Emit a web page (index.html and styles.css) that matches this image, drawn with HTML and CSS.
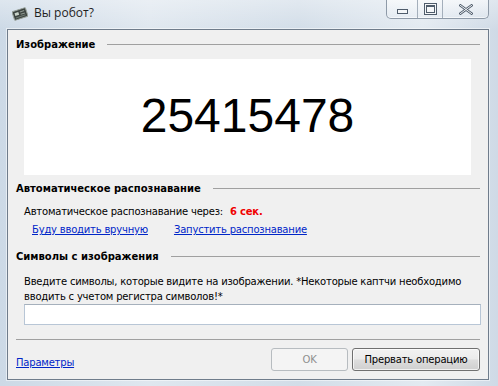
FILE: index.html
```html
<!DOCTYPE html>
<html lang="ru">
<head>
	<meta charset="UTF-8">
	<title>Вы робот?</title>
	<link rel="stylesheet" href="styles.css">
</head>
<body>
	<div class="window">
		<div class="window__title">
			<svg class="window__icon" width="16" height="16" viewBox="0 0 16 16">
				<g transform="rotate(-18 8 8)">
					<rect x="1" y="3.5" width="14" height="9" rx="1" fill="#3d4440" stroke="#9aa39c" stroke-width="1"/>
					<rect x="3" y="5.5" width="4" height="3" fill="#c8d2c8"/>
					<rect x="8.5" y="5.5" width="4.5" height="1" fill="#8f9a92"/>
					<rect x="8.5" y="8" width="4.5" height="1" fill="#8f9a92"/>
					<rect x="3" y="10" width="10" height="1" fill="#6f7a72"/>
				</g>
			</svg>
			<span class="window__caption">Вы робот?</span>
			<div class="window__buttons">
				<div class="window__btn window__btn--min"><span class="glyph-min"></span></div>
				<div class="window__btn window__btn--max"><span class="glyph-max"></span></div>
				<div class="window__btn window__btn--close">
					<svg width="14" height="11" viewBox="0 0 14 11">
						<path d="M1.5 1.5 L12.5 9.5 M12.5 1.5 L1.5 9.5" stroke="#4f5c6b" stroke-width="2.6" stroke-linecap="square"/>
						<path d="M1.5 1.5 L12.5 9.5 M12.5 1.5 L1.5 9.5" stroke="#f4f6f8" stroke-width="1" stroke-linecap="square"/>
					</svg>
				</div>
			</div>
		</div>

		<div class="dialog">
			<div class="group">
				<div class="group__head"><span>Изображение</span><i></i></div>
				<div class="captcha">25415478</div>
			</div>

			<div class="group group--auto">
				<div class="group__head"><span>Автоматическое распознавание</span><i></i></div>
				<p class="auto__line">Автоматическое распознавание через: <b class="auto__time">6 сек.</b></p>
				<div class="auto__links">
					<a href="#">Буду вводить вручную</a>
					<a href="#">Запустить распознавание</a>
				</div>
			</div>

			<div class="group group--input">
				<div class="group__head"><span>Символы с изображения</span><i></i></div>
				<p class="input__hint">Введите символы, которые видите на изображении. *Некоторые каптчи необходимо вводить с учетом регистра символов!*</p>
				<input class="input__field" type="text">
			</div>

			<div class="footer">
				<a href="#">Параметры</a>
				<button class="btn" disabled>OK</button>
				<button class="btn btn--main">Прервать операцию</button>
			</div>
		</div>
	</div>
</body>
</html>
```

FILE: styles.css
```css
html, body {
	margin: 0;
	padding: 0;
}
body {
	width: 498px;
	height: 386px;
	overflow: hidden;
	font-family: "DejaVu Sans", Tahoma, sans-serif;
	font-size: 10px;
	letter-spacing: -0.2px;
	color: #000;
}
.window {
	height: 386px;
	display: flex;
	flex-direction: column;
	background:
		linear-gradient(180deg, rgba(255,255,255,0.35) 0, rgba(255,255,255,0) 30px),
		linear-gradient(90deg, #ccd9e6 0, #dfe7ef 30%, #d2dde8 60%, #e3eaf1 85%, #cfdae6 100%);
}
.window__title {
	height: 29px;
	display: flex;
	align-items: flex-start;
	flex-shrink: 0;
}
.window__icon {
	margin: 6px 0 0 12px;
}
.window__caption {
	margin: 5px 0 0 6px;
	font-family: "Open Sans", "Noto Sans", sans-serif;
	font-size: 12px;
	letter-spacing: 0;
	line-height: 16px;
	color: #1e1e1e;
}
.window__buttons {
	margin-left: auto;
	margin-right: 9px;
	display: flex;
	height: 18px;
	border: 1px solid #8e9aa8;
	border-top: none;
	border-radius: 0 0 5px 5px;
	background: linear-gradient(180deg, rgba(255,255,255,0.55), rgba(230,236,243,0.35));
	box-shadow: inset 0 -1px 0 rgba(255,255,255,0.6);
}
.window__btn {
	display: flex;
	align-items: center;
	justify-content: center;
}
.window__btn--min {
	width: 30px;
	border-right: 1px solid #a4afbb;
}
.window__btn--max {
	width: 24px;
	border-right: 1px solid #a4afbb;
}
.window__btn--close {
	width: 45px;
}
.glyph-min {
	width: 9px;
	height: 3px;
	margin-top: 4px;
	border: 1px solid #4f5c6b;
	background: #f4f6f8;
}
.glyph-max {
	width: 7px;
	height: 5px;
	border: 1px solid #4f5c6b;
	border-top-width: 2px;
	background: #f4f6f8;
	box-shadow: 0 0 0 1px #f4f6f8, 0 0 0 2px #4f5c6b;
}

.dialog {
	margin: 0 9px 6px 7px;
	flex: 1;
	background: #f0f0f0;
	border: 1px solid #6f7c8b;
	box-shadow: 0 0 0 1px rgba(255,255,255,0.5);
	padding: 6px 8px 0 8px;
	display: flex;
	flex-direction: column;
}
.group__head {
	display: flex;
	align-items: center;
	height: 16px;
	font-weight: bold;
	font-size: 10px;
	letter-spacing: 0;
}
.group__head i {
	flex: 1;
	height: 1px;
	background: #a0a0a0;
	margin-left: 12px;
}
.captcha {
	margin: 7px 9px 0 8px;
	height: 116px;
	background: #fff;
	display: flex;
	align-items: center;
	justify-content: center;
	font-family: "Liberation Sans", Arial, sans-serif;
	font-size: 48px;
	letter-spacing: 0;
	padding-bottom: 4px;
	box-sizing: border-box;
}
.group--auto {
	margin-top: 5px;
}
.auto__line {
	margin: 9px 0 0 8px;
	line-height: 13px;
}
.auto__time {
	color: #f00000;
	margin-left: 4px;
}
.auto__links {
	margin: 5px 0 0 16px;
	display: flex;
	gap: 26px;
	line-height: 13px;
}
a {
	color: #0026c8;
	text-decoration: underline;
}
.group--input {
	margin-top: 12px;
}
.input__hint {
	margin: 10px 8px 0 8px;
	line-height: 15px;
}
.input__field {
	display: block;
	margin: 0 0 0 8px;
	width: 457px;
	height: 21px;
	box-sizing: border-box;
	border: 1px solid #b8c6d6;
	border-top-color: #a5b0bc;
	background: #fff;
	outline: none;
}
.footer {
	margin-top: 14px;
	padding-top: 8px;
	border-top: 1px solid #a0a0a0;
	display: flex;
	align-items: center;
}
.footer a {
	margin-right: auto;
	margin-top: 6px;
}
.btn {
	height: 23px;
	box-sizing: border-box;
	font-family: "DejaVu Sans", Tahoma, sans-serif;
	font-size: 10px;
	letter-spacing: -0.2px;
	border-radius: 3px;
	padding: 0;
}
.btn[disabled] {
	width: 77px;
	margin-right: 4px;
	border: 1px solid #b7bcc0;
	background: #f4f4f4;
	color: #8f8f8f;
}
.btn--main {
	width: 128px;
	border: 1px solid #707070;
	background: linear-gradient(180deg, #f2f2f2 0, #ebebeb 48%, #dddddd 52%, #cfcfcf 100%);
	box-shadow: inset 0 0 0 1px rgba(255,255,255,0.7);
	color: #000;
}
```
